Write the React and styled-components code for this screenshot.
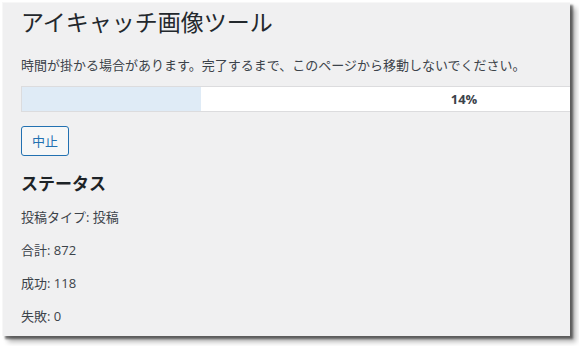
import React from "react";
import styled, { createGlobalStyle } from "styled-components";

const GlobalStyle = createGlobalStyle`
  html, body {
    margin: 0;
    padding: 0;
    background: #ffffff;
  }
  body {
    font-family: "Open Sans", "Noto Sans CJK JP", sans-serif;
  }
`;

const Screen = styled.div`
  width: 579px;
  height: 346px;
  padding: 2px 0 0 2px;
  box-sizing: border-box;
`;

const Panel = styled.div`
  width: 568px;
  height: 334px;
  box-sizing: border-box;
  background: #f0f0f1;
  border-left: 1px solid #f7f7f7;
  border-top: 1px solid #f7f7f7;
  overflow: hidden;
  padding: 5px 0 0 18px;
  display: flex;
  flex-direction: column;
  align-items: flex-start;
  box-shadow: 3px 3px 2px rgba(0, 0, 0, 0.5), 6px 6px 5px rgba(0, 0, 0, 0.28);
  color: #3c434a;
`;

const Title = styled.h1`
  margin: 0;
  font-size: 23px;
  line-height: 29px;
  font-weight: 400;
  color: #23282d;
`;

const Notice = styled.p`
  margin: 19px 0 0;
  font-size: 13px;
  line-height: 19.5px;
`;

const Bar = styled.div`
  position: relative;
  margin-top: 10px;
  width: 886px;
  height: 26px;
  box-sizing: border-box;
  border: 1px solid #dcdcde;
  background: #ffffff;
`;

const Fill = styled.div`
  height: 100%;
  background: #dfebf6;
`;

const Percent = styled.span`
  position: absolute;
  top: 0;
  left: 0;
  right: 0;
  line-height: 24px;
  text-align: center;
  font-size: 13px;
  font-weight: 700;
  color: #3c434a;
`;

const StopButton = styled.button`
  margin-top: 14px;
  height: 30px;
  padding: 0 10px;
  box-sizing: border-box;
  border: 1px solid #2271b1;
  border-radius: 3px;
  background: #f6f7f7;
  color: #2271b1;
  font-family: inherit;
  font-size: 13px;
  line-height: 28px;
  cursor: pointer;
`;

const SectionTitle = styled.h2`
  margin: 17px 0 0;
  font-size: 17px;
  line-height: 22px;
  font-weight: 700;
  color: #1d2327;
`;

const StatusList = styled.div`
  display: flex;
  flex-direction: column;
  gap: 13.5px;
  margin-top: 13px;
`;

const StatusLine = styled.p`
  margin: 0;
  font-size: 13px;
  line-height: 19.5px;
`;

const stats = [
  { label: "投稿タイプ", value: "投稿" },
  { label: "合計", value: "872" },
  { label: "成功", value: "118" },
  { label: "失敗", value: "0" },
];

const App = () => {
  return (
    <Screen>
      <GlobalStyle />
      <Panel>
        <Title>アイキャッチ画像ツール</Title>
        <Notice>
          時間が掛かる場合があります。完了するまで、このページから移動しないでください。
        </Notice>
        <Bar>
          <Fill style={{ width: "179px" }} />
          <Percent>14%</Percent>
        </Bar>
        <StopButton>中止</StopButton>
        <SectionTitle>ステータス</SectionTitle>
        <StatusList>
          {stats.map((s) => (
            <StatusLine key={s.label}>
              {s.label}: {s.value}
            </StatusLine>
          ))}
        </StatusList>
      </Panel>
    </Screen>
  );
};

export default App;
